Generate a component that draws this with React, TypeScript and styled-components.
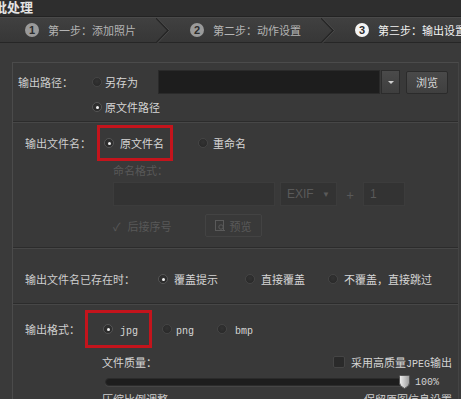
import { FC, ReactNode } from "react";
import styled, { createGlobalStyle } from "styled-components";

const GlobalStyle = createGlobalStyle`
  html, body {
    margin: 0;
    padding: 0;
    background: #3a3a3a;
  }
  body {
    font-family: "Noto Sans CJK SC", "Noto Sans", sans-serif;
    font-size: 11px;
    color: #d4d4d4;
  }
`;

const Window = styled.div`
  width: 461px;
  height: 399px;
  overflow: hidden;
  display: flex;
  flex-direction: column;
  background: #3a3a3a;
`;

const TitleBar = styled.div`
  height: 16px;
  flex: none;
  display: flex;
  align-items: center;
  overflow: hidden;
  background: #2e2e2e;
  border-bottom: 1px solid #232323;

  & span {
    margin-left: -6px;
    margin-top: -3px;
    font-size: 13px;
    font-weight: bold;
    line-height: 16px;
    color: #e4e4e4;
  }
`;

const StepBar = styled.div`
  height: 24px;
  flex: none;
  display: flex;
  align-items: center;
  padding-left: 25px;
  background: linear-gradient(#404040, #373737);
  border-top: 1px solid #4a4a4a;
  border-bottom: 1px solid #262626;
  white-space: nowrap;
`;

const Step = styled.div`
  display: flex;
  align-items: center;
  gap: 9px;
  flex: none;
`;

const StepNum = styled.span<{ $active?: boolean }>`
  width: 14px;
  height: 14px;
  border-radius: 50%;
  display: flex;
  align-items: center;
  justify-content: center;
  font-family: "Liberation Sans", sans-serif;
  font-size: 11px;
  font-weight: bold;
  color: #2c2c2c;
  background: ${(p) => (p.$active ? "#f4f4f4" : "#9a9a9a")};
`;

const StepText = styled.span<{ $active?: boolean }>`
  color: ${(p) => (p.$active ? "#f2f2f2" : "#b4b4b4")};
`;

const ChevronSvg = styled.svg`
  flex: none;
  margin: 0 20px;
`;

const Chevron: FC = () => (
  <ChevronSvg width="14" height="25" viewBox="0 0 14 25">
    <polyline points="0,0 12,12.5 0,25" fill="none" stroke="#262626" strokeWidth="1.4" />
    <polyline points="1.5,0 13.5,12.5 1.5,25" fill="none" stroke="#4a4a4a" strokeWidth="1" />
  </ChevronSvg>
);

const Body = styled.div`
  flex: 1;
  min-height: 0;
  padding: 19px 2px 0 12px;
  display: flex;
  flex-direction: column;
`;

const Panel = styled.div`
  flex: 1;
  min-height: 0;
  overflow: hidden;
  background: #393939;
  border-left: 1px solid #4b4b4b;
  border-top: 1px solid #4b4b4b;
  border-right: 1px solid #444;
  display: flex;
  flex-direction: column;
`;

const Section = styled.div<{ $pad: string }>`
  flex: none;
  padding: ${(p) => p.$pad};
  display: flex;
  flex-direction: column;
`;

const Separator = styled.div`
  flex: none;
  border-top: 1px solid #2c2c2c;
  border-bottom: 1px solid #474747;
`;

const Row = styled.div<{ $mt?: number; $pl?: number; $h?: number }>`
  display: flex;
  align-items: center;
  margin-top: ${(p) => p.$mt ?? 0}px;
  padding-left: ${(p) => p.$pl ?? 0}px;
  height: ${(p) => (p.$h ? `${p.$h}px` : "auto")};
  white-space: nowrap;
`;

const Label = styled.span<{ $w: number }>`
  flex: none;
  width: ${(p) => p.$w}px;
  color: #cfcfcf;
`;

const RadioItem = styled.label<{ $gap?: number; $ml?: number }>`
  display: flex;
  align-items: center;
  gap: ${(p) => p.$gap ?? 4}px;
  margin-left: ${(p) => p.$ml ?? 0}px;
  color: #d6d6d6;
  flex: none;
`;

const RadioDot = styled.span<{ $on?: boolean }>`
  width: 10px;
  height: 10px;
  box-sizing: border-box;
  border-radius: 50%;
  background: radial-gradient(circle at 50% 40%, #333 0%, #262626 100%);
  border: 1px solid ${(p) => (p.$on ? "#555" : "#454545")};
  display: flex;
  align-items: center;
  justify-content: center;

  &::after {
    content: "";
    width: 3px;
    height: 3px;
    border-radius: 50%;
    background: #f2f2f2;
    display: ${(p) => (p.$on ? "block" : "none")};
  }
`;

const Mono = styled.span`
  font-family: "Liberation Mono", monospace;
  font-size: 10px;
`;

const Radio: FC<{ on?: boolean; gap?: number; ml?: number; children: ReactNode }> = ({
  on,
  gap,
  ml,
  children,
}) => (
  <RadioItem $gap={gap} $ml={ml}>
    <RadioDot $on={on} />
    <span>{children}</span>
  </RadioItem>
);

const RedBox = styled.div<{ $pad: string; $h: number }>`
  flex: none;
  display: flex;
  align-items: center;
  height: ${(p) => p.$h}px;
  box-sizing: border-box;
  padding: ${(p) => p.$pad};
  border: 3px solid #c4141c;
`;

const PathInput = styled.div`
  flex: none;
  width: 222px;
  height: 24px;
  box-sizing: border-box;
  margin-left: 20px;
  background: #1d1d1d;
  border: 1px solid #2a2a2a;
`;

const DropButton = styled.div`
  flex: none;
  width: 19px;
  height: 24px;
  box-sizing: border-box;
  margin-left: 1px;
  background: linear-gradient(#4a4a4a, #3e3e3e);
  border: 1px solid #2c2c2c;
  display: flex;
  align-items: center;
  justify-content: center;

  &::after {
    content: "";
    border-left: 3px solid transparent;
    border-right: 3px solid transparent;
    border-top: 3px solid #cfcfcf;
  }
`;

const Button = styled.div<{ $dim?: boolean; $w: number; $ml: number }>`
  flex: none;
  width: ${(p) => p.$w}px;
  height: 23px;
  box-sizing: border-box;
  margin-left: ${(p) => p.$ml}px;
  display: flex;
  align-items: center;
  justify-content: center;
  gap: 4px;
  border-radius: 2px;
  color: ${(p) => (p.$dim ? "#5a5a5a" : "#d8d8d8")};
  background: ${(p) => (p.$dim ? "#393939" : "linear-gradient(#4a4a4a, #3f3f3f)")};
  border: 1px solid ${(p) => (p.$dim ? "#434343" : "#2b2b2b")};
`;

const SubBlock = styled.div<{ $pl: number; $pr?: number }>`
  display: flex;
  flex-direction: column;
  padding-left: ${(p) => p.$pl}px;
  padding-right: ${(p) => p.$pr ?? 0}px;
`;

const DimText = styled.div<{ $mt: number }>`
  margin-top: ${(p) => p.$mt}px;
  line-height: 14px;
  color: #585858;
`;

const DimBox = styled.div<{ $w: number; $ml?: number }>`
  flex: none;
  width: ${(p) => p.$w}px;
  height: 24px;
  box-sizing: border-box;
  margin-left: ${(p) => p.$ml ?? 0}px;
  padding: 0 6px;
  display: flex;
  align-items: center;
  justify-content: space-between;
  background: #333;
  border: 1px solid #3c3c3c;
  color: #5a5a5a;
  font-family: "Liberation Sans", sans-serif;
  font-size: 12px;
`;

const PlusSign = styled.span`
  flex: none;
  width: 26px;
  text-align: center;
  color: #595959;
  font-size: 13px;
`;

const CheckMark = styled.span`
  color: #5a5a5a;
  font-size: 11px;
  margin-right: 7px;
`;

const CheckItem = styled.label`
  display: flex;
  align-items: center;
  gap: 6px;
  color: #d4d4d4;
`;

const CheckBox = styled.span`
  width: 12px;
  height: 12px;
  box-sizing: border-box;
  border-radius: 2px;
  background: #2a2a2a;
  border: 1px solid #454545;
`;

const SpreadRow = styled.div<{ $mt: number }>`
  display: flex;
  align-items: center;
  justify-content: space-between;
  height: 14px;
  margin-top: ${(p) => p.$mt}px;
  white-space: nowrap;
`;

const SliderTrack = styled.div`
  position: relative;
  flex: none;
  width: 305px;
  height: 8px;
  margin-left: 3px;
  box-sizing: border-box;
  border-radius: 4px;
  background: #1d1d1d;
  border: 1px solid #2b2b2b;
  box-shadow: 0 1px 0 #454545;
`;

const SliderThumb = styled.svg`
  position: absolute;
  right: -1px;
  top: -4px;
`;

const Percent = styled(Mono)`
  margin-left: 5px;
  color: #d4d4d4;
`;

const CutText = styled.span`
  color: #cfcfcf;
`;

const App: FC = () => (
  <>
    <GlobalStyle />
    <Window>
      <TitleBar>
        <span>批处理</span>
      </TitleBar>

      <StepBar>
        <Step>
          <StepNum>1</StepNum>
          <StepText>第一步：添加照片</StepText>
        </Step>
        <Chevron />
        <Step>
          <StepNum>2</StepNum>
          <StepText>第二步：动作设置</StepText>
        </Step>
        <Chevron />
        <Step>
          <StepNum $active>3</StepNum>
          <StepText $active>第三步：输出设置</StepText>
        </Step>
      </StepBar>

      <Body>
        <Panel>
          <Section $pad="7px 0 4px 5px">
            <Row $h={24}>
              <Label $w={74}>输出路径：</Label>
              <Radio gap={3}>另存为</Radio>
              <PathInput />
              <DropButton />
              <Button $w={42} $ml={6}>
                浏览
              </Button>
            </Row>
            <Row $mt={3} $h={20} $pl={74}>
              <Radio on gap={3}>
                原文件路径
              </Radio>
            </Row>
          </Section>

          <Separator />

          <Section $pad="2px 0 10px 12px">
            <Row>
              <Label $w={72}>输出文件名：</Label>
              <RedBox $pad="0 6px 0 4px" $h={36}>
                <Radio on gap={6}>
                  原文件名
                </Radio>
              </RedBox>
              <Radio gap={5} ml={25}>
                重命名
              </Radio>
            </Row>
            <SubBlock $pl={88}>
              <DimText $mt={2}>命名格式：</DimText>
              <Row $mt={5}>
                <DimBox $w={162} />
                <DimBox $w={57} $ml={5}>
                  <span>EXIF</span>
                  <span style={{ fontSize: 8 }}>▼</span>
                </DimBox>
                <PlusSign>+</PlusSign>
                <DimBox $w={42}>
                  <span>1</span>
                </DimBox>
              </Row>
              <Row $mt={8} $h={23}>
                <CheckMark>✓</CheckMark>
                <DimText $mt={0}>后接序号</DimText>
                <Button $dim $w={57} $ml={33}>
                  <svg width="11" height="12" viewBox="0 0 11 12">
                    <rect x="0.5" y="0.5" width="8" height="10" fill="none" stroke="#5a5a5a" />
                    <circle cx="6" cy="7" r="2.2" fill="none" stroke="#5a5a5a" />
                    <line x1="7.6" y1="8.6" x2="10" y2="11" stroke="#5a5a5a" />
                  </svg>
                  <span>预览</span>
                </Button>
              </Row>
            </SubBlock>
          </Section>

          <Separator />

          <Section $pad="20px 0 14px 12px">
            <Row $h={20}>
              <Label $w={133}>输出文件名已存在时：</Label>
              <Radio on gap={6}>
                覆盖提示
              </Radio>
              <Radio gap={6} ml={27}>
                直接覆盖
              </Radio>
              <Radio gap={6} ml={23}>
                不覆盖，直接跳过
              </Radio>
            </Row>
          </Section>

          <Separator />

          <Section $pad="5px 0 0 12px">
            <Row>
              <Label $w={60}>输出格式：</Label>
              <RedBox $pad="0 11px 0 15px" $h={38}>
                <Radio on gap={7}>
                  <Mono>jpg</Mono>
                </Radio>
              </RedBox>
              <Radio gap={4} ml={10}>
                <Mono>png</Mono>
              </Radio>
              <Radio gap={8} ml={23}>
                <Mono>bmp</Mono>
              </Radio>
            </Row>
            <SubBlock $pl={77} $pr={6}>
              <SpreadRow $mt={7}>
                <span>文件质量：</span>
                <CheckItem>
                  <CheckBox />
                  <span>
                    采用高质量<Mono>JPEG</Mono>输出
                  </span>
                </CheckItem>
              </SpreadRow>
              <Row $mt={6} $h={14}>
                <SliderTrack>
                  <SliderThumb width="11" height="14" viewBox="0 0 11 14">
                    <defs>
                      <linearGradient id="thumb" x1="0" y1="0" x2="1" y2="0">
                        <stop offset="0" stopColor="#f0f0f0" />
                        <stop offset="1" stopColor="#9a9a9a" />
                      </linearGradient>
                    </defs>
                    <path
                      d="M0.5 1.5 Q0.5 0.5 1.5 0.5 H9.5 Q10.5 0.5 10.5 1.5 V8 Q10.5 11 5.5 13.5 Q0.5 11 0.5 8 Z"
                      fill="url(#thumb)"
                      stroke="#555"
                    />
                  </SliderThumb>
                </SliderTrack>
                <Percent>100%</Percent>
              </Row>
              <SpreadRow $mt={3}>
                <CutText>压缩比例调整</CutText>
                <CutText>保留原图信息设置</CutText>
              </SpreadRow>
            </SubBlock>
          </Section>
        </Panel>
      </Body>
    </Window>
  </>
);

export default App;
